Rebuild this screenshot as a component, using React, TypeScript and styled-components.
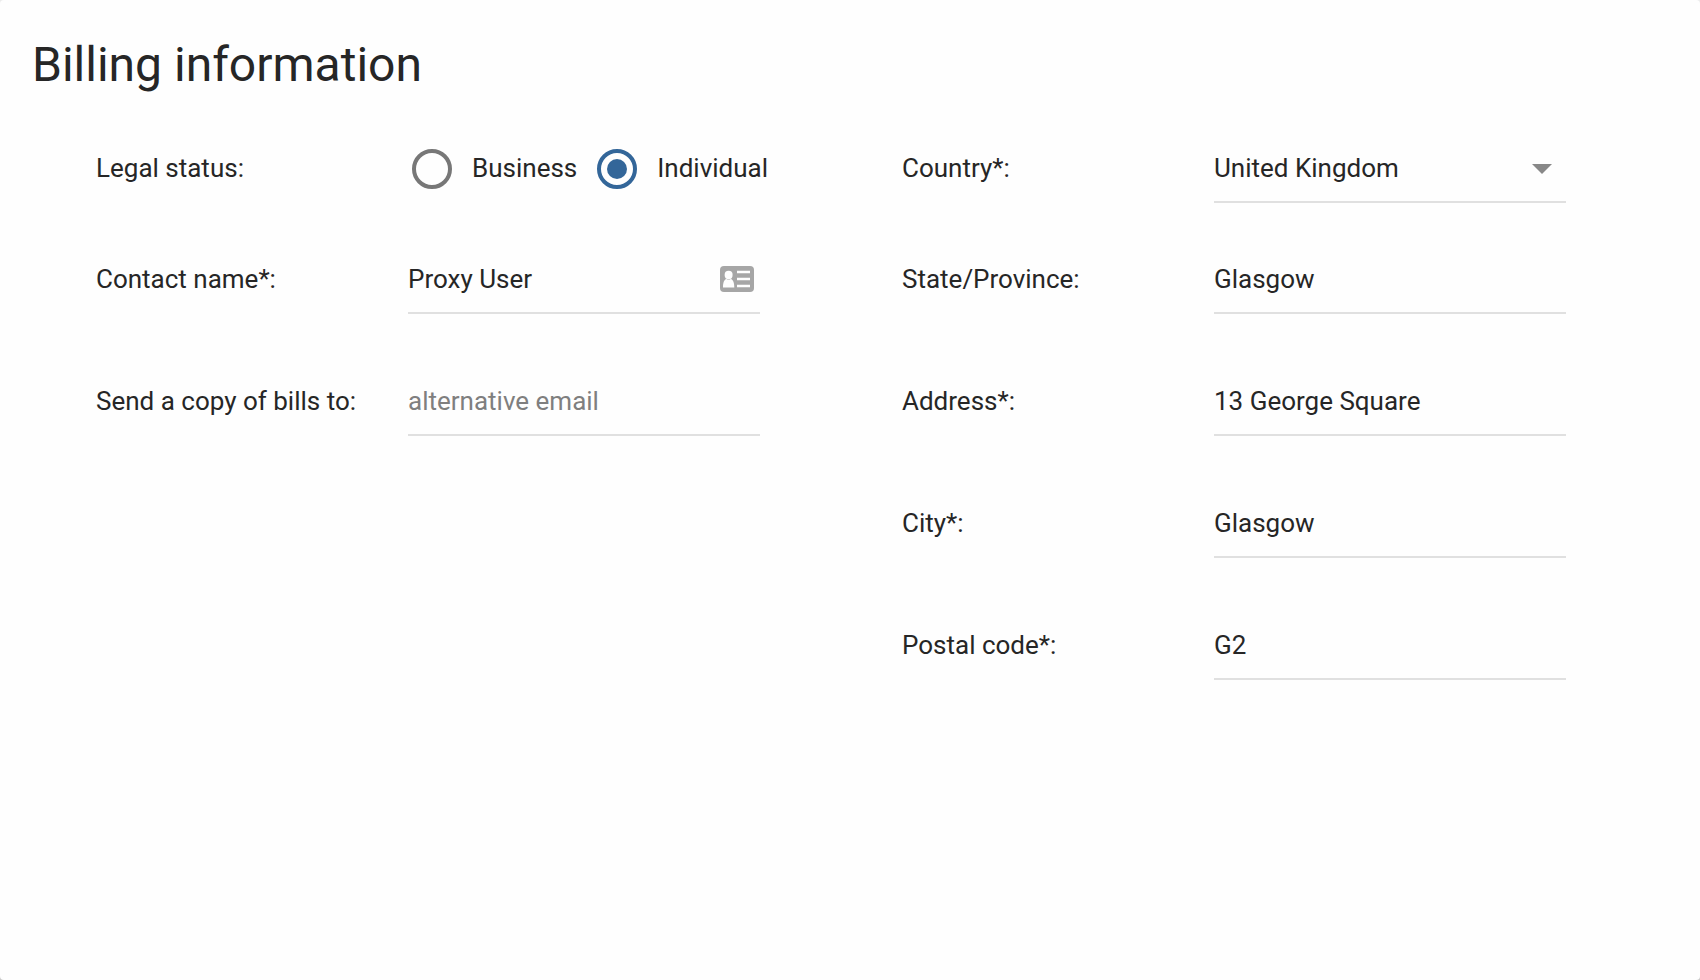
import React, { useState } from "react";
import styled, { createGlobalStyle } from "styled-components";

const GlobalStyle = createGlobalStyle`
  *, *::before, *::after { box-sizing: border-box; }
  body {
    margin: 0;
    background: linear-gradient(#ececec, #c8c8c8);
    color: #262626;
    font: 26px/32px Roboto, "Liberation Sans", sans-serif;
  }
`;

const Card = styled.main`
  min-height: 100vh;
  padding: 33px 32px;
  border-radius: 4px;
  background: #fefefe;
`;

const Title = styled.h1`
  margin: 0 0 38px;
  font-size: 48px;
  line-height: 64px;
  font-weight: 400;
`;

const Form = styled.form`
  display: grid;
  grid-template-columns: repeat(2, minmax(0, 1fr));
  gap: 142px;
  padding: 0 102px 0 64px;
`;

const Column = styled.div`
  display: flex;
  flex-direction: column;
`;

const Row = styled.div<{ $tight?: boolean }>`
  display: grid;
  grid-template-columns: 312px minmax(0, 1fr);
  align-items: center;
  height: 68px;
  margin-bottom: ${(p) => (p.$tight ? 43 : 54)}px;
`;

const Label = styled.label`
  padding-bottom: 2px;
  white-space: nowrap;
`;

const Control = styled.div`
  display: flex;
  align-items: center;
  height: 68px;
  border-bottom: 2px solid #e0e0e0;
`;

const TextInput = styled.input`
  flex: 1;
  min-width: 0;
  height: 32px;
  padding: 0;
  border: 0;
  outline: 0;
  background: transparent;
  color: inherit;
  font: inherit;

  &::placeholder {
    color: #7f7f7f;
    opacity: 1;
  }
`;

const Select = styled.select`
  flex: 1;
  min-width: 0;
  height: 32px;
  padding: 0;
  border: 0;
  outline: 0;
  appearance: none;
  background: transparent;
  color: inherit;
  font: inherit;
`;

const Arrow = styled.svg`
  flex: none;
  width: 20px;
  height: 12px;
  margin-right: 14px;
  fill: #888;
  pointer-events: none;
`;

const CardIcon = styled.svg`
  flex: none;
  width: 34px;
  height: 26px;
  margin-right: 6px;
`;

const RadioGroup = styled.div`
  display: flex;
  align-items: center;
  gap: 20px;
  padding-left: 4px;
  white-space: nowrap;
`;

const RadioLabel = styled.label`
  display: flex;
  align-items: center;
  gap: 20px;
`;

const Radio = styled.input`
  display: grid;
  flex: none;
  place-items: center;
  width: 40px;
  height: 40px;
  margin: 0;
  border: 4px solid #777;
  border-radius: 50%;
  appearance: none;

  &:checked {
    border-color: #336699;
  }

  &:checked::before {
    width: 20px;
    height: 20px;
    border-radius: 50%;
    background: #336699;
    content: "";
  }
`;

const RadioText = styled.span`
  padding-bottom: 2px;
`;

type TextFieldProps = {
  id: string;
  label: string;
  value?: string;
  placeholder?: string;
  icon?: React.ReactNode;
};

function TextField({ id, label, value, placeholder, icon }: TextFieldProps) {
  return (
    <Row>
      <Label htmlFor={id}>{label}</Label>
      <Control>
        <TextInput id={id} name={id} defaultValue={value} placeholder={placeholder} />
        {icon}
      </Control>
    </Row>
  );
}

function ContactCard() {
  return (
    <CardIcon viewBox="0 0 34 26" aria-hidden="true">
      <rect width="34" height="26" rx="4" fill="#a6a6a6" />
      <g fill="#fefefe">
        <ellipse cx="8.6" cy="8.9" rx="4" ry="4.2" />
        <path d="M3 21.500c0-4.700 1-7.800 3.400-8.500 1.400.8 3 .8 4.400 0 2.400.7 3.500 3.800 3.500 8.500z" />
        <path d="M17 4.800h13v2.500H17zM17 11.800h13v2.500H17zM17 18.700h13v2.500H17z" />
      </g>
    </CardIcon>
  );
}

export default function App() {
  const [status, setStatus] = useState("Individual");

  return (
    <>
      <GlobalStyle />
      <Card>
        <Title>Billing information</Title>
        <Form>
          <Column>
            <Row $tight>
              <Label as="span" id="status-label">Legal status:</Label>
              <RadioGroup role="radiogroup" aria-labelledby="status-label">
                {["Business", "Individual"].map((name) => (
                  <RadioLabel key={name}>
                    <Radio
                      type="radio"
                      name="status"
                      value={name}
                      checked={status === name}
                      onChange={() => setStatus(name)}
                    />
                    <RadioText>{name}</RadioText>
                  </RadioLabel>
                ))}
              </RadioGroup>
            </Row>
            <TextField id="contact" label="Contact name*:" value="Proxy User" icon={<ContactCard />} />
            <TextField id="email" label="Send a copy of bills to:" placeholder="alternative email" />
          </Column>
          <Column>
            <Row $tight>
              <Label htmlFor="country">Country*:</Label>
              <Control>
                <Select id="country" name="country" defaultValue="United Kingdom">
                  <option>United Kingdom</option>
                </Select>
                <Arrow viewBox="0 0 20 12" aria-hidden="true">
                  <path d="M0 2h20L10 12z" />
                </Arrow>
              </Control>
            </Row>
            <TextField id="state" label="State/Province:" value="Glasgow" />
            <TextField id="address" label="Address*:" value="13 George Square" />
            <TextField id="city" label="City*:" value="Glasgow" />
            <TextField id="postal" label="Postal code*:" value="G2" />
          </Column>
        </Form>
      </Card>
    </>
  );
}
